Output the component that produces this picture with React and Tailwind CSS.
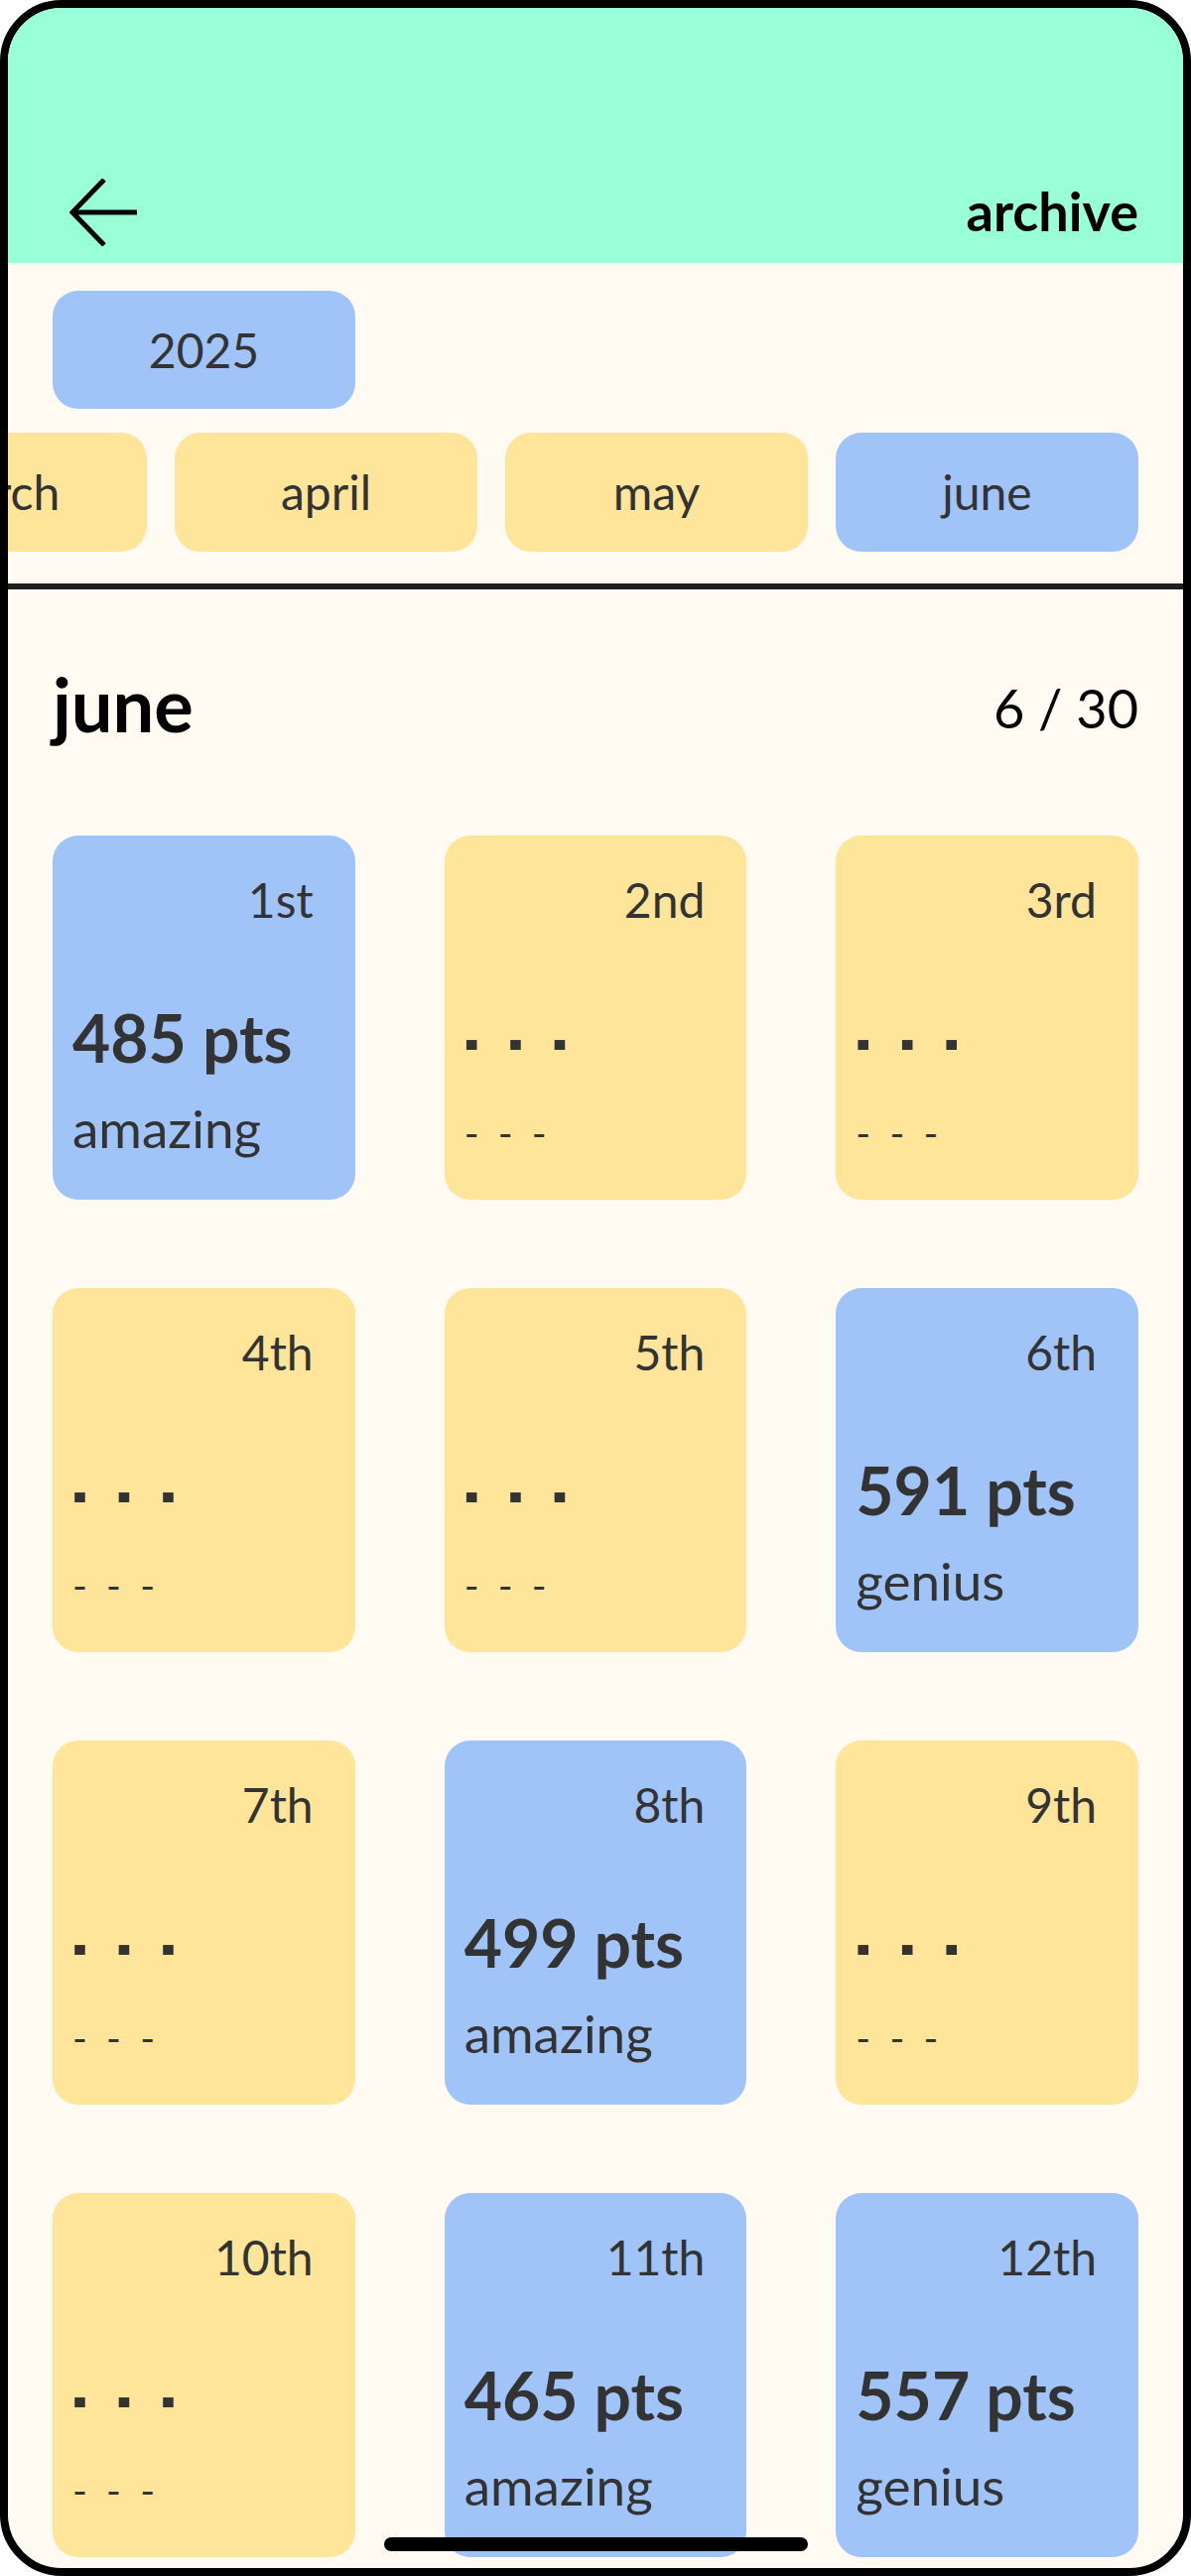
import React from 'react'

const MONTHS = ['march', 'april', 'may', 'june']

// played days in june
const SCORES = {
  1: { pts: 485, label: 'amazing' },
  6: { pts: 591, label: 'genius' },
  8: { pts: 499, label: 'amazing' },
  11: { pts: 465, label: 'amazing' },
  12: { pts: 557, label: 'genius' },
}

const ordinal = (n) => {
  const t = n % 100
  if (t >= 11 && t <= 13) return `${n}th`
  if (n % 10 === 1) return `${n}st`
  if (n % 10 === 2) return `${n}nd`
  if (n % 10 === 3) return `${n}rd`
  return `${n}th`
}

const BackArrow = () => (
  <svg width="68" height="68" viewBox="0 0 68 68" fill="none" stroke="black" strokeWidth="5">
    <path d="M35 1 L3 34 L35 67" />
    <path d="M3 34 H68" />
  </svg>
)

function DayCard({ day }) {
  const s = SCORES[day]
  return (
    <div className={`h-[367px] rounded-[26px] flex flex-col pl-[20px] pt-[41px] text-[#333] ${s ? 'bg-[#a0c4f8]' : 'bg-[#ffe599]'}`}>
      <p className="text-right pr-[42px] text-[48px] leading-none">{ordinal(day)}</p>
      {s ? (
        <>
          <p className="mt-[82px] text-[66px] font-bold leading-none whitespace-nowrap">{s.pts} pts</p>
          <p className="mt-[31px] text-[53px] leading-none">{s.label}</p>
        </>
      ) : (
        <>
          <p className="mt-[82px] text-[66px] font-bold leading-none whitespace-nowrap">
            <span className="inline-block text-[40px] font-black scale-y-[2.2] -translate-y-[9px] [word-spacing:20px]">- - -</span>
          </p>
          <p className="mt-[31px] text-[53px] leading-none whitespace-nowrap">
            <span className="text-[40px] [word-spacing:9px]">- - -</span>
          </p>
        </>
      )}
    </div>
  )
}

export default function App() {
  const days = Array.from({ length: 12 }, (_, i) => i + 1)
  return (
    <div className="w-[1200px] h-[2596px] bg-white font-['Lato',sans-serif]">
      <div className="relative h-full rounded-[62px] border-[8px] border-black bg-[#fffaf2] overflow-hidden flex flex-col">
        {/* header */}
        <div className="h-[257px] shrink-0 bg-[#99ffd9] flex items-end justify-between pl-[62px] pr-[45px] pb-[17px]">
          <BackArrow />
          <span className="mb-[8px] text-[54px] font-bold leading-none text-black">archive</span>
        </div>

        {/* year */}
        <div className="pt-[28px] pl-[45px]">
          <div className="w-[305px] h-[119px] rounded-[26px] bg-[#a0c4f8] flex items-center justify-center text-[48px] leading-none text-[#333]">
            2025
          </div>
        </div>

        {/* months */}
        <div className="mt-[24px] h-[120px] shrink-0 flex justify-end gap-[28px] pr-[45px] overflow-hidden">
          {MONTHS.map((m) => (
            <div
              key={m}
              className={`shrink-0 w-[305px] h-[120px] rounded-[26px] flex items-center justify-center text-[48px] leading-none text-[#333] ${m === 'june' ? 'bg-[#a0c4f8]' : 'bg-[#ffe599]'}`}
            >
              {m}
            </div>
          ))}
        </div>

        <div className="mt-[32px] h-[6px] shrink-0 bg-[#1f1f1f]" />

        {/* month heading */}
        <div className="mt-[79px] px-[45px] flex justify-between items-start">
          <h1 className="text-[74px] font-bold leading-none text-black">june</h1>
          <span className="mt-[14px] text-[54px] leading-none text-black">6 / 30</span>
        </div>

        {/* days */}
        <div className="mt-[95px] px-[45px] grid grid-cols-3 gap-x-[90px] gap-y-[89px]">
          {days.map((d) => (
            <DayCard key={d} day={d} />
          ))}
        </div>

        {/* home indicator */}
        <div className="absolute left-[379px] top-[2549px] w-[427px] h-[14px] rounded-full bg-black" />
      </div>
    </div>
  )
}
